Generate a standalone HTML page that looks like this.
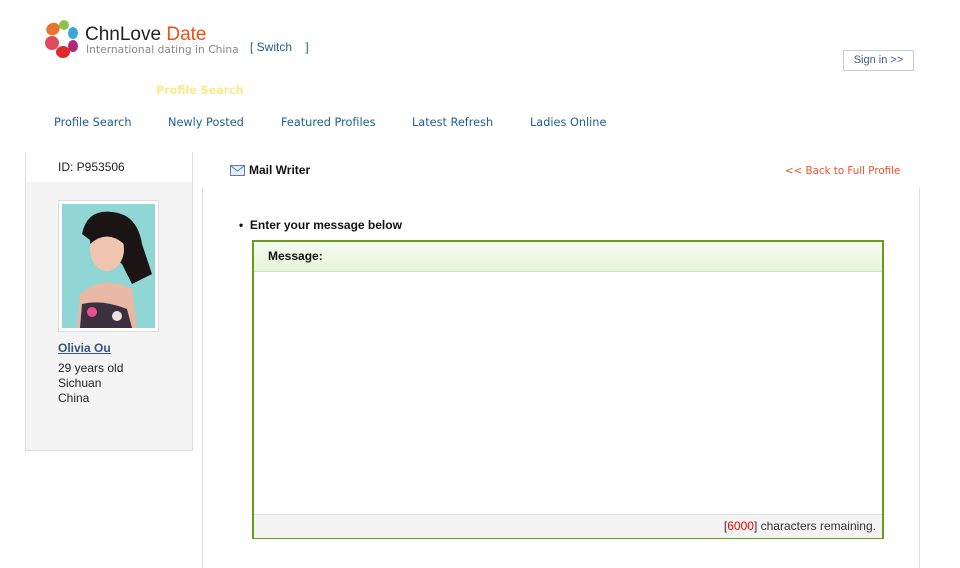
<!DOCTYPE html>
<html><head><style>
body{margin:0;width:960px;height:561px;overflow:hidden;background:#fff;font-family:"Liberation Sans",Arial,sans-serif;position:relative}
.a{position:absolute}
.nav{font-family:"DejaVu Sans","Liberation Sans",sans-serif;font-size:11.3px;color:#1c5f8e;top:116px}
</style></head><body>
<svg class="a" style="left:44px;top:19px" width="36" height="40" viewBox="0 0 36 40">
<ellipse cx="9" cy="10" rx="7" ry="6" fill="#e8732a" transform="rotate(-30 9 10)"/>
<ellipse cx="20" cy="6" rx="5" ry="5" fill="#8bc34a"/>
<ellipse cx="29" cy="14" rx="5" ry="6" fill="#3aa6dd"/>
<ellipse cx="29" cy="27" rx="5" ry="6" fill="#b0287a"/>
<ellipse cx="19" cy="33" rx="7" ry="6" fill="#e02a2a"/>
<ellipse cx="8" cy="24" rx="7" ry="7" fill="#e04a5a"/>
</svg>
<div class="a" style="left:85px;top:24px;font-size:19px;color:#222">ChnLove <span style="color:#f04e14">Date</span></div>
<div class="a" style="left:86px;top:43px;font-size:10.7px;color:#888;font-family:'DejaVu Sans',sans-serif">International dating in China</div>
<div class="a" style="left:250px;top:40px;font-size:12px;color:#1c5f8e">[ Switch &nbsp;&nbsp;&nbsp;]</div>
<div class="a" style="left:843px;top:50px;width:69px;height:19px;border:1px solid #ccc;font-size:11px;color:#3b5d8e;text-align:center;line-height:19px">Sign in &gt;&gt;</div>
<div class="a" style="left:156px;top:84px;font-size:11.1px;font-weight:bold;color:#fde98a;font-family:'DejaVu Sans',sans-serif">Profile Search</div>
<div class="a nav" style="left:54px">Profile Search</div>
<div class="a nav" style="left:168px">Newly Posted</div>
<div class="a nav" style="left:281px">Featured Profiles</div>
<div class="a nav" style="left:412px">Latest Refresh</div>
<div class="a nav" style="left:530px">Ladies Online</div>
<div class="a" style="left:25px;top:152px;width:166px;height:298px;border-left:1px solid #ddd;border-right:1px solid #ddd;border-bottom:1px solid #ddd;background:#f4f4f4"></div>
<div class="a" style="left:26px;top:152px;width:166px;height:30px;background:#fff"></div>
<div class="a" style="left:58px;top:160px;font-size:12px;color:#222">ID: P953506</div>
<div class="a" style="left:58px;top:200px;width:99px;height:130px;border:1px solid #ddd;background:#fff"></div>
<svg class="a" style="left:62px;top:204px" width="93" height="124" viewBox="0 0 93 124">
<rect width="93" height="124" fill="#8fd6d4"/>
<path d="M20 30 Q25 5 50 8 Q75 10 80 40 L90 70 L70 80 L60 60 Z" fill="#1a1414"/>
<ellipse cx="45" cy="45" rx="17" ry="22" fill="#f0c5b0"/>
<path d="M28 35 Q35 10 60 22 L62 40 Q45 25 28 40Z" fill="#1a1414"/>
<path d="M15 124 L18 90 Q40 70 70 85 L75 124Z" fill="#e8b8a5"/>
<path d="M20 100 Q40 95 65 105 L70 124 L18 124Z" fill="#3a3040"/>
<circle cx="30" cy="108" r="5" fill="#e85090"/><circle cx="55" cy="112" r="5" fill="#f0e0e0"/>
</svg>
<div class="a" style="left:58px;top:341px;font-size:12px;font-weight:bold;color:#34557c;text-decoration:underline">Olivia Ou</div>
<div class="a" style="left:58px;top:361px;font-size:12px;color:#222;line-height:15px">29 years old<br>Sichuan<br>China</div>
<svg class="a" style="left:230px;top:165px" width="15" height="11"><rect x=".5" y=".5" width="14" height="10" fill="#e8eef8" stroke="#5a7bb0"/><path d="M1 1 L7.5 6 L14 1" fill="none" stroke="#5a7bb0"/></svg>
<div class="a" style="left:249px;top:163px;font-size:12px;font-weight:bold;color:#111">Mail Writer</div>
<div class="a" style="left:785px;top:165px;font-size:10.3px;color:#f0502a;font-family:'DejaVu Sans',sans-serif">&lt;&lt; Back to Full Profile</div>
<div class="a" style="left:202px;top:188px;width:716px;height:380px;border-left:1px solid #ddd;border-right:1px solid #ddd"></div>
<div class="a" style="left:239px;top:218px;font-size:12px;font-weight:bold;color:#111">&#8226;&nbsp; Enter your message below</div>
<div class="a" style="left:252px;top:240px;width:628px;height:295px;border:2px solid #6b9a1f;background:#fff"></div>
<div class="a" style="left:254px;top:242px;width:628px;height:29px;background:linear-gradient(#f5fbef,#e6f4da);border-bottom:1px solid #cfe3bd"></div>
<div class="a" style="left:268px;top:249px;font-size:12px;font-weight:bold;color:#111">Message:</div>
<div class="a" style="left:254px;top:514px;width:628px;height:23px;background:#f3f3f3;border-top:1px solid #ddd"></div>
<div class="a" style="left:600px;top:519px;width:276px;text-align:right;font-size:12px;color:#333">[<span style="color:#e00">6000</span>] characters remaining.</div>
</body></html>
